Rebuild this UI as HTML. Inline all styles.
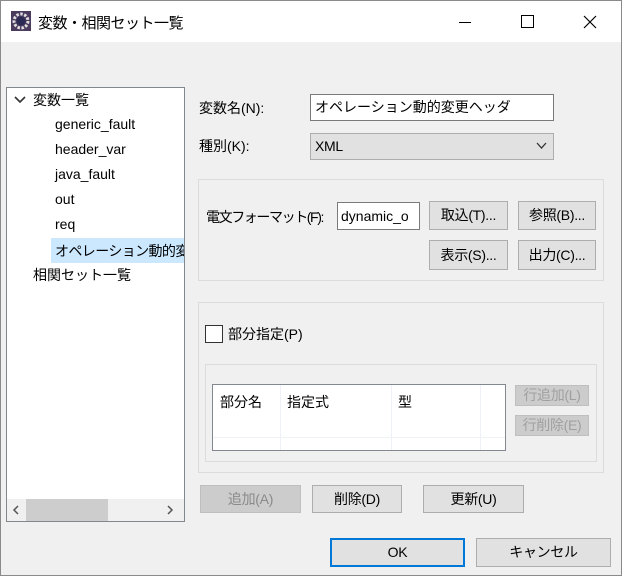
<!DOCTYPE html>
<html><head><meta charset="utf-8"><style>
*{box-sizing:border-box;margin:0;padding:0}
body{width:624px;height:577px;background:#fff;font-family:"Liberation Sans","Noto Sans CJK JP",sans-serif;font-size:14px;color:#000;position:relative;overflow:hidden}
.a{position:absolute;white-space:nowrap}
.win{position:absolute;left:0;top:0;width:622px;height:576px;border:1px solid #8a8a8a;background:#f0f0f0}
.tb{position:absolute;left:1px;top:1px;width:620px;height:41px;background:#fff}
.btn{position:absolute;background:#e1e1e1;border:1px solid #adadad;text-align:center;font-size:14px;letter-spacing:-0.3px}
.dis{background:#cccccc;border-color:#bfbfbf;color:#a0a0a0}
.grp{position:absolute;border:1px solid #dcdcdc}
.inp{position:absolute;background:#fff;border:1px solid #7a7a7a;font-size:14px;padding-left:4px}
</style></head><body>
<div class="win"></div>
<div class="tb"></div>
<svg class="a" style="left:11px;top:11px" width="20" height="20" viewBox="0 0 20 20"><rect width="20" height="20" fill="#4a3a5e"/><circle cx="10" cy="10" r="7" fill="none" stroke="#ddd" stroke-width="3" stroke-dasharray="2.5 1.5"/><circle cx="10" cy="10" r="4.5" fill="#2a2a55"/></svg>
<div class="a" style="left:38px;top:12px;font-size:15px;letter-spacing:-0.5px">変数・相関セット一覧</div>
<div class="a" style="left:459px;top:22px;width:12px;height:1px;background:#000"></div>
<div class="a" style="left:521px;top:15px;width:13px;height:13px;border:1px solid #000"></div>
<svg class="a" style="left:583px;top:15px" width="14" height="14"><path d="M1 1L13 13M13 1L1 13" stroke="#000" stroke-width="1.2"/></svg>

<div class="a" style="left:6px;top:87px;width:179px;height:435px;background:#fff;border:1px solid #828790"></div>
<svg class="a" style="left:14px;top:95px" width="12" height="10"><path d="M1 2L6 7L11 2" fill="none" stroke="#333" stroke-width="1.6"/></svg>
<div class="a" style="left:33px;top:90px">変数一覧</div>
<div class="a" style="left:55px;top:116px">generic_fault</div>
<div class="a" style="left:55px;top:141px">header_var</div>
<div class="a" style="left:55px;top:166px">java_fault</div>
<div class="a" style="left:55px;top:191px">out</div>
<div class="a" style="left:55px;top:216px">req</div>
<div class="a" style="left:51px;top:238px;width:133px;height:25px;background:#cce8ff;overflow:hidden"><span style="position:absolute;left:4px;top:3px;letter-spacing:-0.6px">オペレーション動的変更ヘッダ</span></div>
<div class="a" style="left:33px;top:265px">相関セット一覧</div>
<div class="a" style="left:7px;top:499px;width:177px;height:22px;background:#f0f0f0"></div>
<div class="a" style="left:26px;top:499px;width:82px;height:22px;background:#cdcdcd"></div>
<svg class="a" style="left:12px;top:505px" width="8" height="10"><path d="M6 1L2 5L6 9" fill="none" stroke="#555" stroke-width="1.5"/></svg>
<svg class="a" style="left:166px;top:505px" width="8" height="10"><path d="M2 1L6 5L2 9" fill="none" stroke="#555" stroke-width="1.5"/></svg>

<div class="a" style="left:199px;top:98px">変数名(N):</div>
<div class="inp" style="left:310px;top:94px;width:244px;height:27px;line-height:25px">オペレーション動的変更ヘッダ</div>
<div class="a" style="left:199px;top:136px">種別(K):</div>
<div class="btn" style="left:310px;top:133px;width:244px;height:27px;text-align:left;padding-left:4px;line-height:25px">XML</div>
<svg class="a" style="left:536px;top:142px" width="11" height="8"><path d="M1 1L5.5 6L10 1" fill="none" stroke="#333" stroke-width="1.3"/></svg>

<div class="grp" style="left:198px;top:179px;width:406px;height:102px"></div>
<div class="a" style="left:206px;top:207px;letter-spacing:-1.4px">電文フォーマット(F):</div>
<div class="inp" style="left:337px;top:202px;width:83px;height:28px;line-height:26px;overflow:hidden;padding-left:3px">dynamic_o</div>
<div class="btn" style="left:429px;top:201px;width:79px;height:29px;line-height:27px">取込(T)...</div>
<div class="btn" style="left:518px;top:201px;width:78px;height:29px;line-height:27px">参照(B)...</div>
<div class="btn" style="left:429px;top:240px;width:79px;height:30px;line-height:28px">表示(S)...</div>
<div class="btn" style="left:518px;top:240px;width:78px;height:30px;line-height:28px">出力(C)...</div>

<div class="grp" style="left:198px;top:302px;width:406px;height:171px"></div>
<div class="a" style="left:205px;top:325px;width:18px;height:18px;background:#fff;border:1px solid #333"></div>
<div class="a" style="left:228px;top:324px">部分指定(P)</div>
<div class="grp" style="left:205px;top:364px;width:392px;height:98px"></div>
<div class="a" style="left:212px;top:384px;width:294px;height:67px;background:#fff;border:1px solid #828790"></div>
<div class="a" style="left:280px;top:385px;width:1px;height:65px;background:#eef2f7"></div>
<div class="a" style="left:391px;top:385px;width:1px;height:65px;background:#eef2f7"></div>
<div class="a" style="left:480px;top:385px;width:1px;height:65px;background:#eef2f7"></div>
<div class="a" style="left:213px;top:437px;width:292px;height:1px;background:#eef2f7"></div>
<div class="a" style="left:220px;top:392px">部分名</div>
<div class="a" style="left:287px;top:392px">指定式</div>
<div class="a" style="left:398px;top:392px">型</div>
<div class="btn dis" style="left:515px;top:385px;width:74px;height:21px;line-height:19px">行追加(L)</div>
<div class="btn dis" style="left:515px;top:415px;width:74px;height:21px;line-height:19px">行削除(E)</div>

<div class="btn dis" style="left:200px;top:485px;width:101px;height:28px;line-height:26px;color:#8a8a8a">追加(A)</div>
<div class="btn" style="left:312px;top:485px;width:90px;height:28px;line-height:26px">削除(D)</div>
<div class="btn" style="left:423px;top:485px;width:101px;height:28px;line-height:26px">更新(U)</div>
<div class="btn" style="left:330px;top:538px;width:135px;height:29px;line-height:25px;border:2px solid #0078d7">OK</div>
<div class="btn" style="left:476px;top:538px;width:135px;height:29px;line-height:27px">キャンセル</div>
</body></html>
